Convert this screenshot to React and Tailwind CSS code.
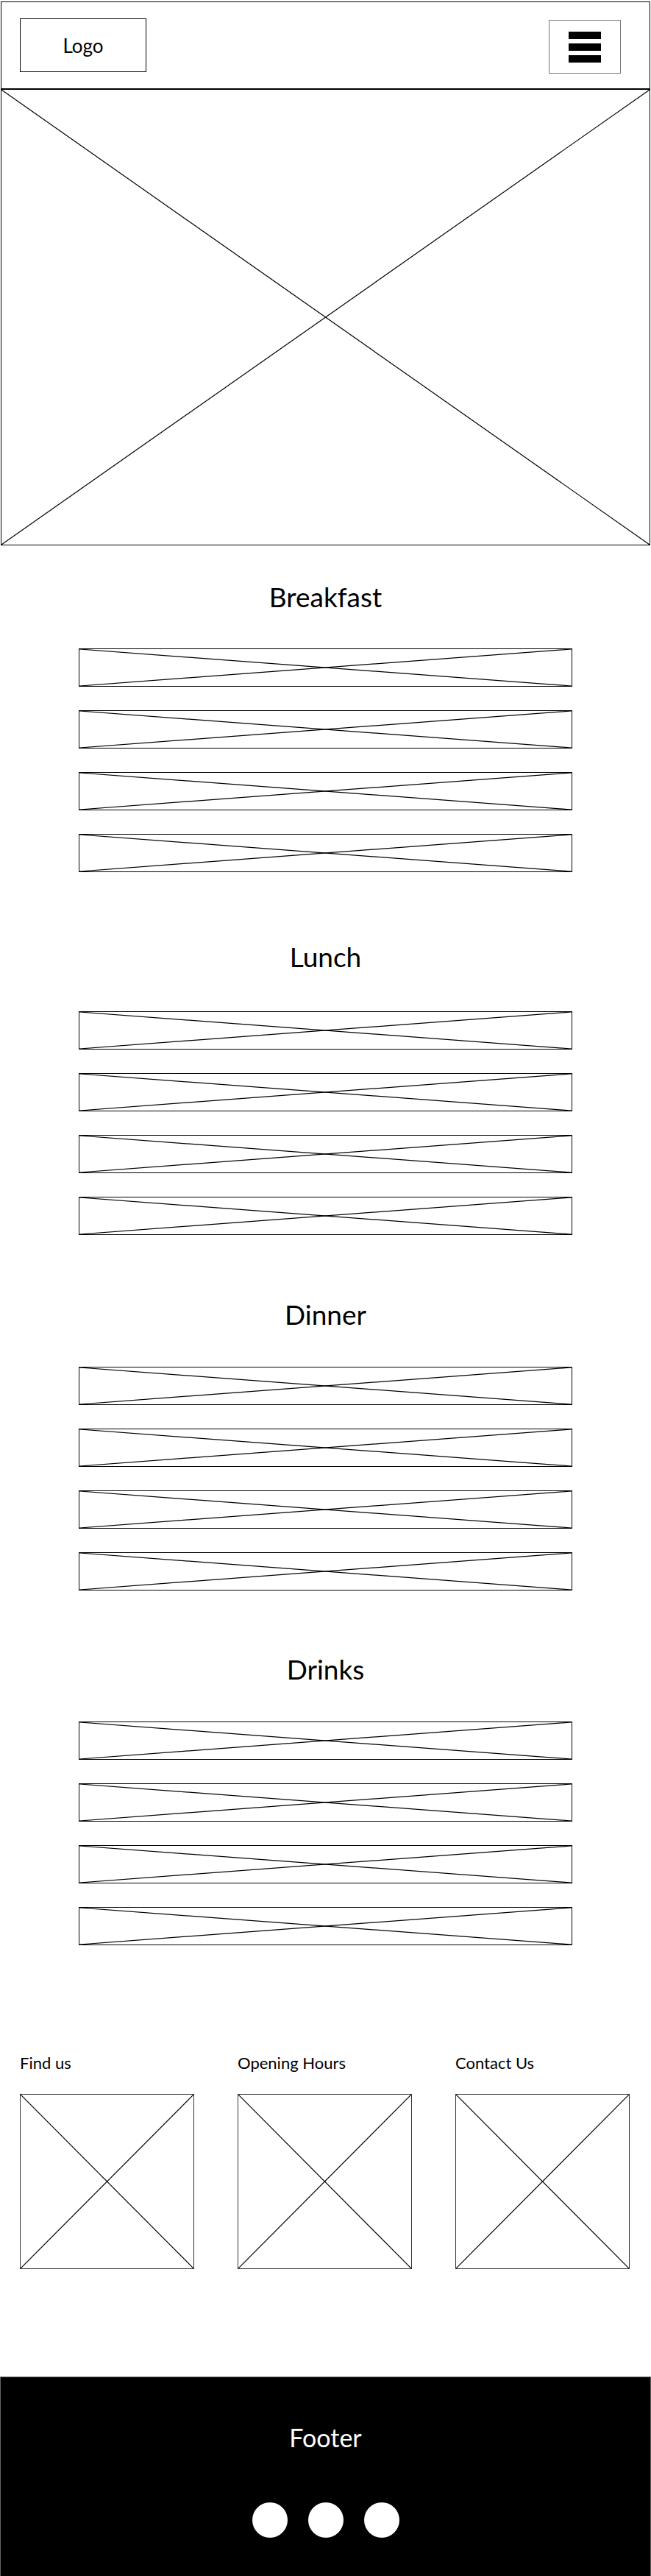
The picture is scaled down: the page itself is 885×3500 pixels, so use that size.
import React from "react";

const sections = [
  { title: "Breakfast", wrap: "mt-[51px]", head: "mb-[52px]" },
  { title: "Lunch", wrap: "mt-[96px]", head: "mb-[56px]" },
  { title: "Dinner", wrap: "mt-[89px]", head: "mb-[53px]" },
  { title: "Drinks", wrap: "mt-[88px]", head: "mb-[53px]" },
];

const infoBoxes = ["Find us", "Opening Hours", "Contact Us"];

// placeholder cross, corner to corner
const Cross = () => (
  <svg
    className="block h-full w-full"
    viewBox="0 0 100 100"
    preserveAspectRatio="none"
  >
    <line x1="0" y1="0" x2="100" y2="100" stroke="#000" strokeWidth="1.2" vectorEffect="non-scaling-stroke" />
    <line x1="0" y1="100" x2="100" y2="0" stroke="#000" strokeWidth="1.2" vectorEffect="non-scaling-stroke" />
  </svg>
);

const Header = () => (
  <header className="mt-[2px] mx-px h-[120px] border-x border-t border-b-2 border-black flex justify-between items-start pl-[25px] pr-[39px]">
    <div className="mt-[22px] w-[172px] h-[73px] border border-black flex items-center justify-center text-[26px] leading-none">
      Logo
    </div>
    <button className="mt-[24px] w-[98px] h-[73px] border border-[#777] flex flex-col items-center justify-center gap-[6px]">
      <span className="block w-[44px] h-[10px] bg-black" />
      <span className="block w-[44px] h-[10px] bg-black" />
      <span className="block w-[44px] h-[10px] bg-black" />
    </button>
  </header>
);

const MenuSection = ({ title, wrap, head }) => (
  <section className={wrap}>
    <h2 className={`text-center text-[37px] leading-none ${head}`}>{title}</h2>
    <ul className="flex flex-col items-center gap-[32px]">
      {[0, 1, 2, 3].map((i) => (
        <li key={i} className="w-[671px] h-[52px] border border-black">
          <Cross />
        </li>
      ))}
    </ul>
  </section>
);

const App = () => {
  return (
    <div className="w-[885px] bg-white text-black font-['Lato','Noto_Sans',sans-serif]">
      <Header />
      <div className="mx-px h-[619px] border-x border-b border-black">
        <Cross />
      </div>

      {sections.map((s) => (
        <MenuSection key={s.title} {...s} />
      ))}

      <div className="mt-[149px] pl-[27px] grid grid-cols-[237px_237px_237px] gap-x-[59px]">
        {infoBoxes.map((label) => (
          <div key={label}>
            <p className="text-[22px] leading-none">{label}</p>
            <div className="mt-[31px] h-[238px] border-[1.5px] border-[#333]">
              <Cross />
            </div>
          </div>
        ))}
      </div>

      <footer className="mt-[146px] h-[271px] bg-black border-x border-t border-[#666] pt-[65px] flex flex-col items-center">
        <p className="text-white text-[34px] leading-none">Footer</p>
        <div className="mt-[71px] flex gap-[28px]">
          <span className="block size-[48px] rounded-full bg-white" />
          <span className="block size-[48px] rounded-full bg-white" />
          <span className="block size-[48px] rounded-full bg-white" />
        </div>
      </footer>
    </div>
  );
};

export default App;
